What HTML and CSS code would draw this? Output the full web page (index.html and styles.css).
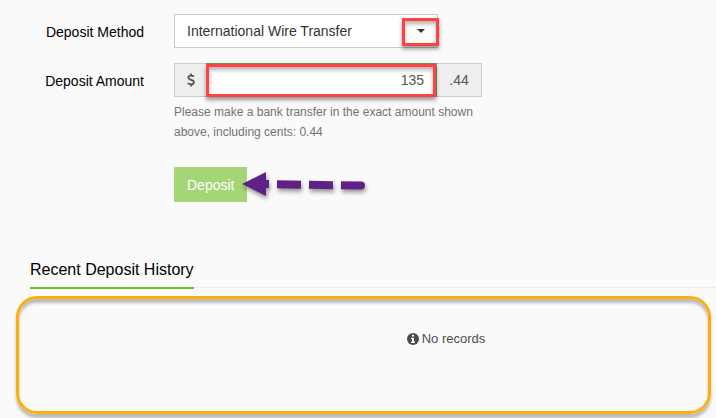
FILE: index.html
```html
<!DOCTYPE html>
<html lang="en">

<head>
    <meta charset="UTF-8">
    <meta name="viewport" content="width=device-width, initial-scale=1.0">
    <title>Deposit</title>
    <link rel="stylesheet" href="styles.css">
</head>

<body>
    <form class="deposit-form">
        <div class="form-row">
            <label for="method">Deposit Method</label>
            <div class="select-box">
                <select id="method">
                    <option>International Wire Transfer</option>
                </select>
                <span class="caret"></span>
                <span class="mark mark-caret"></span>
            </div>
        </div>
        <div class="form-row">
            <label for="amount">Deposit Amount</label>
            <div class="field">
                <div class="input-group">
                    <span class="addon addon-currency">
                        <!-- dollar icon -->
                        <svg width="8" height="14" viewBox="0 0 8 14" fill="none" stroke="#555" stroke-width="1.8">
                            <path d="M7 3.6C6 2.9 5 2.6 4 2.6C2.4 2.6 1.3 3.3 1.3 4.6C1.3 7.4 6.9 6.2 6.9 9.2C6.9 10.6 5.6 11.4 4 11.4C2.7 11.4 1.6 11 .7 10.2M4 .4V3M4 11V13.6" />
                        </svg>
                    </span>
                    <div class="amount-box">
                        <input type="text" id="amount" value="135">
                        <span class="mark mark-amount"></span>
                    </div>
                    <span class="addon addon-cents">.44</span>
                </div>
                <p class="help">Please make a bank transfer in the exact amount shown above, including cents: 0.44</p>
            </div>
        </div>
        <div class="actions">
            <button type="button" class="btn">Deposit</button>
            <svg class="arrow" width="130" height="34" viewBox="0 0 130 34" fill="#5f2187">
                <path d="M0 17L24 5V13H27V21H24V29Z" />
                <path d="M35 13.2L59 13.7V21.7L35 21.2Z" />
                <path d="M67 13.7L91 14.2V22.2L67 21.7Z" />
                <path d="M99 14.2L119 14.5A4 4 0 0 1 119 22.5L99 22.2Z" />
            </svg>
        </div>
    </form>

    <section class="history">
        <header class="history-header">
            <h2>Recent Deposit History</h2>
        </header>
        <div class="records">
            <svg width="12" height="12" viewBox="0 0 12 12">
                <circle cx="6" cy="6" r="6" fill="#4d4d4d" />
                <path d="M5 1.8H7V3.5H5ZM4 4.7H7V8.7H8V10H4V8.7H5V6H4Z" fill="#fff" />
            </svg>
            <span>No records</span>
        </div>
    </section>
</body>

</html>
```
FILE: styles.css
```css
* {
    margin: 0;
    padding: 0;
    box-sizing: border-box;
}

body {
    background-color: #fafafa;
    font-family: "Liberation Sans", Arial, sans-serif;
    font-size: 14px;
    line-height: 20px;
    color: #000;
}

.deposit-form {
    display: flex;
    flex-direction: column;
    gap: 15px;
    padding: 14px 30px 0;
}

.form-row {
    display: grid;
    grid-template-columns: 114px minmax(0, 308px);
    column-gap: 30px;
}

.form-row label {
    padding-top: 8px;
    text-align: right;
}

.select-box {
    position: relative;
    width: 264px;
    height: 34px;
}

.select-box select {
    appearance: none;
    width: 100%;
    height: 100%;
    padding: 0 12px;
    border: 1px solid #ccc;
    border-radius: 0;
    background-color: #fff;
    font: inherit;
    color: #333;
}

.caret {
    position: absolute;
    top: 15px;
    right: 13px;
    border: 4px solid transparent;
    border-top-color: #333;
    border-bottom: 0;
    pointer-events: none;
}

/* red highlight boxes */
.mark {
    position: absolute;
    border: 3px solid #ff4343;
    box-shadow: 0 3px 4px rgba(0, 0, 0, 0.4), inset 0 3px 4px rgba(0, 0, 0, 0.3);
    pointer-events: none;
}

.mark-caret {
    top: 4px;
    right: -1px;
    width: 37px;
    height: 28px;
}

.mark-amount {
    inset: 1px 1px 0 0;
}

.input-group {
    display: flex;
    height: 34px;
}

.addon {
    display: flex;
    align-items: center;
    justify-content: center;
    border: 1px solid #ccc;
    background-color: #eee;
    color: #555;
}

.addon-currency {
    width: 32px;
    border-right: 0;
}

.addon-cents {
    width: 45px;
    border-left: 0;
}

.amount-box {
    position: relative;
    flex: 1;
}

.amount-box input {
    width: 100%;
    height: 100%;
    padding: 0 12px;
    border: 1px solid #5c9a5c;
    background-color: #fff;
    font: inherit;
    color: #555;
    text-align: right;
}

.help {
    padding-top: 5px;
    font-size: 12px;
    color: #737373;
}

.actions {
    display: flex;
    padding: 10px 0 0 144px;
}

.btn {
    height: 35px;
    padding: 0 13px;
    border: 0;
    background-color: #a4d576;
    font: inherit;
    color: #fff;
}

/* arrow tip lies over the button edge */
.arrow {
    z-index: 1;
    margin-left: -5px;
    filter: drop-shadow(1px 3px 2px rgba(0, 0, 0, 0.4));
}

.history {
    padding: 55px 5px 8px 16px;
}

.history-header {
    display: flex;
    height: 32px;
    margin: 0 -5px 0 14px;
    background: repeating-linear-gradient(to right, #e0e0e0 0 1px, transparent 1px 2px) left 0 bottom 1px / 100% 1px no-repeat;
}

.history-header h2 {
    padding-top: 3px;
    border-bottom: 2px solid #6fbe2c;
    font-size: 16px;
    font-weight: normal;
}

.records {
    display: flex;
    justify-content: center;
    gap: 3px;
    height: 118px;
    margin-top: 7px;
    padding: 30px 0 0 165px;
    border: 3px solid #fcaf0c;
    border-radius: 21px;
    box-shadow: 0 4px 3px rgba(0, 0, 0, 0.25), inset 0 4px 3px rgba(0, 0, 0, 0.25);
    font-size: 13px;
    color: #4d4d4d;
}

.records svg {
    margin-top: 4px;
}
```
